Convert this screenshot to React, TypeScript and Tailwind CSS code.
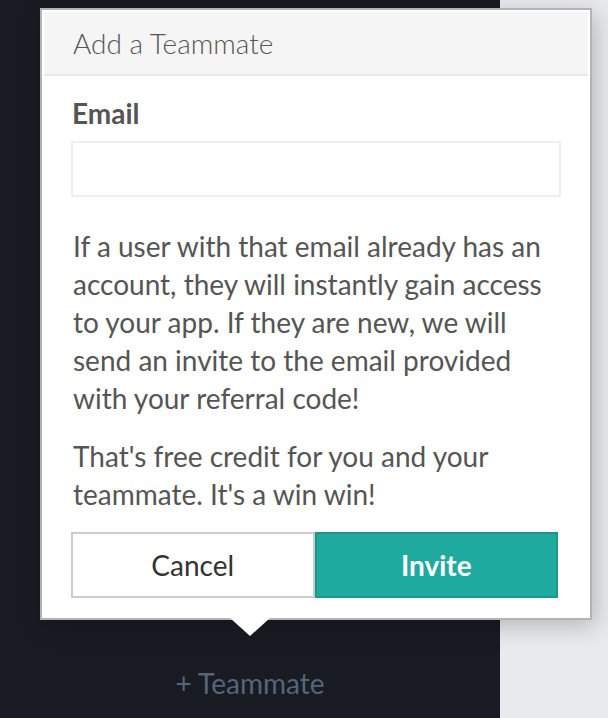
import React from "react";

const App = () => {
  return (
    <div
      className="relative flex h-[718px] w-[608px] overflow-hidden bg-[#e8ebed]"
      style={{ fontFamily: "Lato, 'Open Sans', sans-serif" }}
    >
      <div className="flex h-full w-[500px] flex-col items-center justify-end bg-[#181b22] pb-[18px]">
        <button className="text-[28px] leading-[34px] text-[#56657a]">+ Teammate</button>
      </div>

      <div className="absolute left-[40px] top-[8px] w-[552px] border-2 border-[#b3b3b3] bg-white p-[2px] shadow-[4px_6px_22px_rgba(0,0,0,0.22)]">
        <div className="flex h-[64px] items-center border-b-2 border-[#e8e8e8] bg-[#f5f5f5] pl-[29px]">
          <span className="text-[28px] font-light text-[#555]">Add a Teammate</span>
        </div>
        <div className="flex flex-col px-[27px] pb-[18px]">
          <label className="mt-[22px] pl-[1px] text-[28px] font-bold leading-[30px] text-[#555]">
            Email
          </label>
          <input
            type="text"
            className="mt-[13px] h-[56px] w-full border-2 border-[#eeeeee] bg-white px-3 text-[24px] outline-none"
          />
          <p className="mt-[30px] pl-[2px] text-[28px] leading-[38px] text-[#555]">
            If a user with that email already has an account, they will instantly gain access to your
            app. If they are new, we will send an invite to the email provided with your referral
            code!
          </p>
          <p className="mt-[20px] pl-[2px] text-[28px] leading-[38px] text-[#555]">
            That's free credit for you and your teammate. It's a win win!
          </p>
          <div className="mt-[19px] flex h-[66px] w-[487px]">
            <button className="flex-1 border-2 border-[#cccccc] bg-white text-[28px] text-[#333]">
              Cancel
            </button>
            <button className="flex-1 border-2 border-[#1a968b] bg-[#1eaa9e] text-[28px] font-bold text-white">
              Invite
            </button>
          </div>
        </div>
        <div className="absolute left-[188px] top-full h-0 w-0 border-l-[20px] border-r-[20px] border-t-[18px] border-l-transparent border-r-transparent border-t-white" />
      </div>
    </div>
  );
};

export default App;
